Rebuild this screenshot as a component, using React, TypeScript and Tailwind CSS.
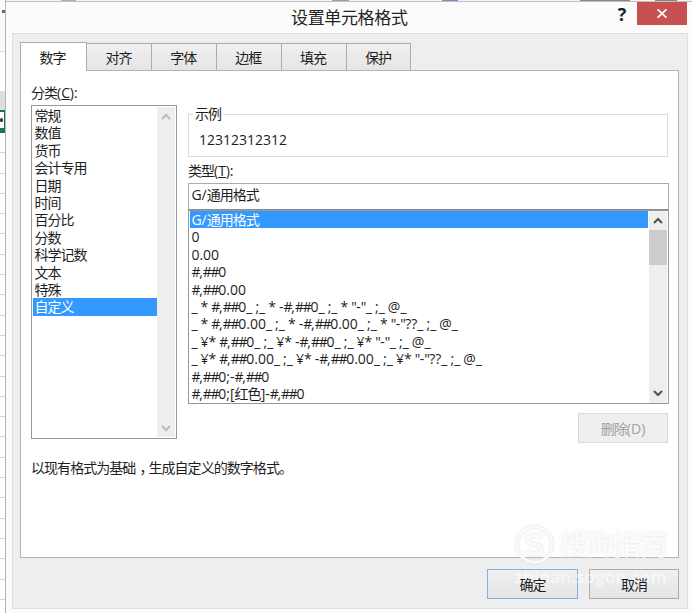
import clsx from "clsx";
import React from "react";

const TABS = ["数字", "对齐", "字体", "边框", "填充", "保护"];

const CATEGORIES = [
    "常规",
    "数值",
    "货币",
    "会计专用",
    "日期",
    "时间",
    "百分比",
    "分数",
    "科学记数",
    "文本",
    "特殊",
    "自定义",
];

const FORMATS = [
    "G/通用格式",
    "0",
    "0.00",
    "#,##0",
    "#,##0.00",
    '_ * #,##0_ ;_ * -#,##0_ ;_ * "-"_ ;_ @_ ',
    '_ * #,##0.00_ ;_ * -#,##0.00_ ;_ * "-"??_ ;_ @_ ',
    '_ ¥* #,##0_ ;_ ¥* -#,##0_ ;_ ¥* "-"_ ;_ @_ ',
    '_ ¥* #,##0.00_ ;_ ¥* -#,##0.00_ ;_ ¥* "-"??_ ;_ @_ ',
    "#,##0;-#,##0",
    "#,##0;[红色]-#,##0",
];

function runClass(run: string) {
    if (run === "，") {
        // centred in its cell, as in the system font
        return "pl-[4px] tracking-[-4.95px]";
    }
    if (/[\u3000-\u9fff]/.test(run)) {
        return "tracking-[-0.95px]";
    }
    if (/#/.test(run)) {
        return "tracking-[-1.3px]";
    }
    if (/[*"_]/.test(run)) {
        return "tracking-[-0.6px]";
    }
    return undefined;
}

// Chinese characters and wide symbols are set tighter than the rest.
function Label({ text }: { text: string }) {
    const runs = text.split(/([\u3000-\u9fff]+|，|#+|[*"_]+)/).filter(Boolean);
    return (
        <span className="whitespace-pre">
            {runs.map((run, i) => (
                <span key={i} className={runClass(run)}>
                    {run}
                </span>
            ))}
        </span>
    );
}

function AccessLabel({ text, accessKey }: { text: string; accessKey: string }) {
    return (
        <div className="leading-[18px] whitespace-pre">
            <Label text={text} />
            <span className="tracking-[-0.1px]">
                (<u className="underline-offset-1">{accessKey}</u>):
            </span>
        </div>
    );
}

function Chevron({ up, className }: { up?: boolean; className: string }) {
    return (
        <svg
            viewBox="0 0 10 7"
            className={clsx("w-[10px] h-[7px] fill-none", className)}
            strokeWidth="2"
        >
            <path d={up ? "M1 6 5 2 9 6" : "M1 1 5 5 9 1"} />
        </svg>
    );
}

type ListBoxProps = {
    items: string[];
    selected: number;
    className: string;
};

function ListBox({ items, selected, className }: ListBoxProps) {
    return (
        <div className={className}>
            {items.map((item, i) => (
                <div
                    key={item}
                    className={clsx(
                        "h-[17.42px] pl-[1.4px] leading-[17.4px]",
                        i === selected && "bg-[#3399ff] text-white"
                    )}
                >
                    <Label text={item} />
                </div>
            ))}
        </div>
    );
}

// The slice of worksheet that shows beside the dialog.
function SheetEdge() {
    return (
        <div className="w-[5px] shrink-0 bg-white flex flex-col overflow-hidden">
            <div className="h-[52px] shrink-0 border-b border-[#dcdcdc] bg-[#fafafa] flex items-start justify-end pt-[10px]">
                <div className="w-[3px] h-[3px] bg-[#666]" />
            </div>
            <div className="h-[39px] shrink-0" />
            <div className="h-[19px] shrink-0 bg-[#dedede]" />
            <div className="h-[23px] shrink-0 border-t-2 border-b border-r border-[#217346] flex flex-col items-end justify-between pt-[6px]">
                <div className="w-[3px] h-[4px] mr-px rounded-full bg-[#333]" />
                <div className="w-[4px] h-[4px] bg-[#217346]" />
            </div>
            {Array.from({ length: 24 }, (_, i) => (
                <div
                    key={i}
                    className="h-[20.3px] shrink-0 border-b border-[#d6d6d6]"
                />
            ))}
        </div>
    );
}

function TitleBar() {
    return (
        <div className="h-[31px] flex justify-end">
            <div className="grow pl-[285px] pt-[4px] text-[17px] leading-[24px] tracking-[-0.35px] text-[#222]">
                设置单元格格式
            </div>
            <div className="w-[30px] text-center text-[18px] leading-[24px] font-bold">
                ?
            </div>
            <div className="w-[50px] h-[22.5px] bg-[#c75050] flex items-center justify-center">
                <svg
                    viewBox="0 0 10 9"
                    className="w-[10px] h-[9px] stroke-white"
                    strokeWidth="1.8"
                >
                    <path d="M.5 .3 9.5 8.7M9.5 .3 .5 8.7" />
                </svg>
            </div>
        </div>
    );
}

function TabBar() {
    return (
        <div className="h-[28px] flex items-end">
            {TABS.map((tab, i) => (
                <div
                    key={tab}
                    className={clsx(
                        "flex justify-center items-center border-t border-r border-[#acacac]",
                        i === 0
                            ? "w-[67px] h-[29px] -mb-px pr-[2px] bg-white border-l relative"
                            : "w-[64.9px] h-[27px] pr-px bg-linear-to-b from-[#f0f0f0] to-[#e5e5e5]"
                    )}
                >
                    <Label text={tab} />
                </div>
            ))}
        </div>
    );
}

function NumberPanel() {
    return (
        <div className="w-[659px] h-[488px] bg-white border border-[#b4b4b4] pl-[10px] pt-[13px]">
            <div className="flex">
                <div className="w-[146px]">
                    <AccessLabel text="分类" accessKey="C" />
                    <div className="mt-[3px] h-[334px] border border-[#96999c] flex p-px">
                        <ListBox
                            items={CATEGORIES}
                            selected={11}
                            className="w-[124px]"
                        />
                        <div className="ml-auto w-[18px] bg-[#eeeeee] flex flex-col items-center justify-between pt-[6px] pb-[5px]">
                            <Chevron up className="stroke-[#bcbcbc]" />
                            <Chevron className="stroke-[#bcbcbc]" />
                        </div>
                    </div>
                </div>
                <div className="ml-[11px] w-[481px] pt-[21px]">
                    <fieldset className="w-[480px] h-[52px] border border-[#dcdcdc] pl-[4px]">
                        <legend className="px-[2px] leading-[18px]">
                            <Label text="示例" />
                        </legend>
                        <div className="pl-[6px] pt-[8px] leading-[18px]">
                            12312312312
                        </div>
                    </fieldset>
                    <div className="mt-[5px]">
                        <AccessLabel text="类型" accessKey="T" />
                    </div>
                    <div className="mt-[3px] h-[27px] border border-[#ababab] border-b-[#8c8c8c] pl-[2.4px] leading-[22px]">
                        <Label text="G/通用格式" />
                    </div>
                    <div className="h-[194px] border border-[#96999c] flex pl-px">
                        <ListBox
                            items={FORMATS}
                            selected={0}
                            className="w-[458px]"
                        />
                        <div className="ml-px w-[18px] bg-[#eeeeee] flex flex-col items-center">
                            <Chevron up className="mt-[6px] stroke-[#505050]" />
                            <div className="mt-[6px] w-[18px] h-[35px] bg-[#cdcdcd]" />
                            <Chevron className="mt-auto mb-[6px] stroke-[#505050]" />
                        </div>
                    </div>
                    <div className="mt-[9px] ml-auto mr-px w-[90px] h-[30px] border border-[#dadada] bg-[#efefef] text-[#a0a0a0] flex items-center justify-center">
                        <Label text="删除(D)" />
                    </div>
                </div>
            </div>
            <div className="mt-[16px] leading-[18px]">
                <Label text="以现有格式为基础，生成自定义的数字格式。" />
            </div>
        </div>
    );
}

function Watermark() {
    return (
        <div className="absolute left-[515px] top-[525px] w-[160px] text-white">
            <div className="flex items-center gap-[5px] drop-shadow-[0_0_1px_#dcdcdc]">
                <svg
                    viewBox="0 0 40 40"
                    className="w-[39px] h-[39px] fill-none stroke-[#fafafa]"
                >
                    <circle cx="20" cy="20" r="18" strokeWidth="3" />
                    <path
                        d="M27 13C22 9 13 10 13 15C13 21 27 18 27 25C27 31 17 31 12 27"
                        strokeWidth="4"
                    />
                </svg>
                <div className="text-[28px] leading-[39px] font-bold tracking-[-1px] opacity-80">
                    搜狗指南
                </div>
            </div>
            <div className="mt-px text-[17px] leading-[24px] tracking-[0.2px] font-semibold opacity-60">
                zhinan.sogou.com
            </div>
        </div>
    );
}

function DialogButton({ text, className }: { text: string; className: string }) {
    return (
        <div
            className={clsx(
                "h-[30px] border flex items-center justify-center bg-linear-to-b from-[#f0f0f0] to-[#e5e5e5]",
                className
            )}
        >
            <div className="relative z-10">
                <Label text={text} />
            </div>
        </div>
    );
}

export default function App() {
    return (
        <div className="relative w-[692px] h-[613px] overflow-hidden flex bg-white text-[14px] text-[#1e1e1e] font-['Open_Sans','Noto_Sans_CJK_SC',sans-serif]">
            <SheetEdge />
            <div className="grow border-l border-[#b5b5b5] bg-[#fbfbfb]">
                <div className="h-[2px] border-b border-[#c0c0c0] bg-[#f4f4f4] flex pl-[55px]">
                    <div className="w-[15px] bg-[#b0b0b0]" />
                    <div className="ml-[256px] w-[17px] bg-[#a0a0a0]" />
                    <div className="ml-[93px] w-[16px] bg-[#7090c8]" />
                    <div className="ml-[122px] w-[50px] bg-[#888]" />
                    <div className="ml-[25px] w-[22px] bg-[#888]" />
                </div>
                <div className="w-[681px]">
                    <TitleBar />
                </div>
                <div className="ml-[6px] w-[676px] h-[576px] border border-[#dedede] bg-[#eeeeee] pl-[7px] pt-[8px]">
                    <TabBar />
                    <NumberPanel />
                    <div className="mt-[11px] flex gap-[11px] pl-[467px]">
                        <DialogButton
                            text="确定"
                            className="w-[91px] border-[#7eb4ea]"
                        />
                        <DialogButton
                            text="取消"
                            className="w-[90px] border-[#acacac]"
                        />
                    </div>
                </div>
            </div>
            <Watermark />
        </div>
    );
}
